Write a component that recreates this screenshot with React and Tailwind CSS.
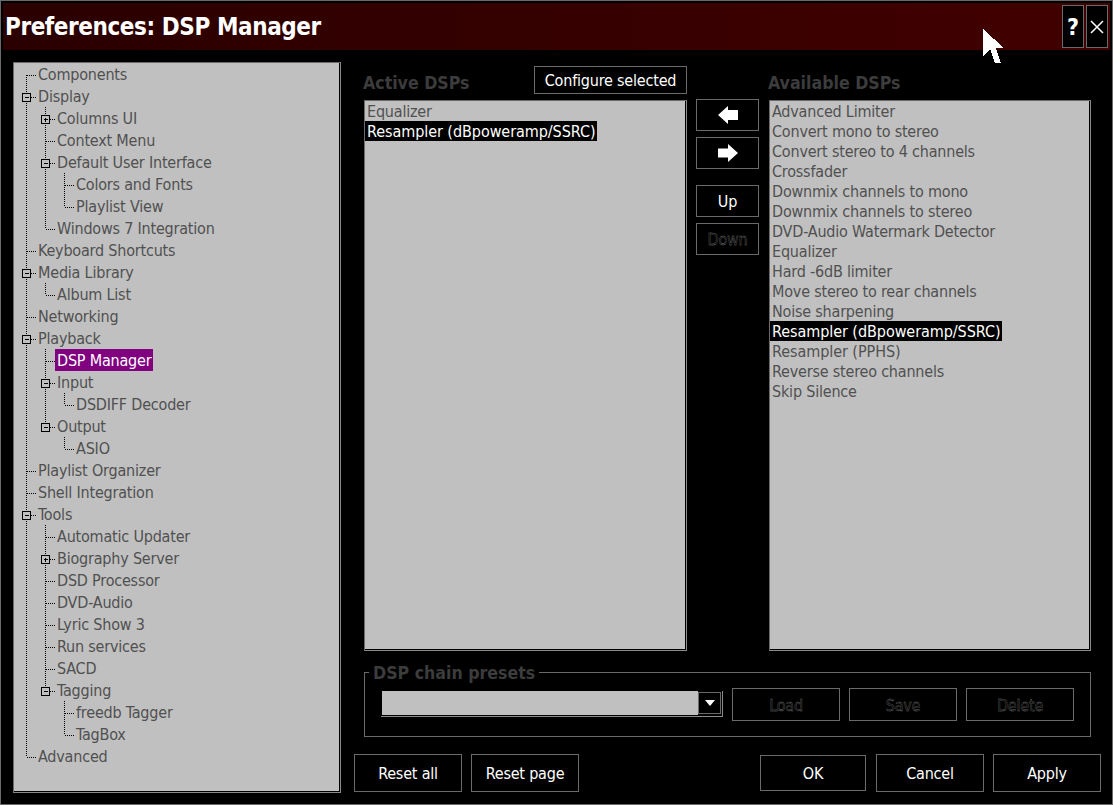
const tree = [
  { t: 'Components', l: 0 },
  { t: 'Display', l: 0, box: '-' },
  { t: 'Columns UI', l: 1, box: '+' },
  { t: 'Context Menu', l: 1 },
  { t: 'Default User Interface', l: 1, box: '-' },
  { t: 'Colors and Fonts', l: 2 },
  { t: 'Playlist View', l: 2 },
  { t: 'Windows 7 Integration', l: 1 },
  { t: 'Keyboard Shortcuts', l: 0 },
  { t: 'Media Library', l: 0, box: '-' },
  { t: 'Album List', l: 1 },
  { t: 'Networking', l: 0 },
  { t: 'Playback', l: 0, box: '-' },
  { t: 'DSP Manager', l: 1, selected: true },
  { t: 'Input', l: 1, box: '-' },
  { t: 'DSDIFF Decoder', l: 2 },
  { t: 'Output', l: 1, box: '-' },
  { t: 'ASIO', l: 2 },
  { t: 'Playlist Organizer', l: 0 },
  { t: 'Shell Integration', l: 0 },
  { t: 'Tools', l: 0, box: '-' },
  { t: 'Automatic Updater', l: 1 },
  { t: 'Biography Server', l: 1, box: '+' },
  { t: 'DSD Processor', l: 1 },
  { t: 'DVD-Audio', l: 1 },
  { t: 'Lyric Show 3', l: 1 },
  { t: 'Run services', l: 1 },
  { t: 'SACD', l: 1 },
  { t: 'Tagging', l: 1, box: '-' },
  { t: 'freedb Tagger', l: 2 },
  { t: 'TagBox', l: 2 },
  { t: 'Advanced', l: 0 },
];

const available = [
  'Advanced Limiter',
  'Convert mono to stereo',
  'Convert stereo to 4 channels',
  'Crossfader',
  'Downmix channels to mono',
  'Downmix channels to stereo',
  'DVD-Audio Watermark Detector',
  'Equalizer',
  'Hard -6dB limiter',
  'Move stereo to rear channels',
  'Noise sharpening',
  'Resampler (dBpoweramp/SSRC)',
  'Resampler (PPHS)',
  'Reverse stereo channels',
  'Skip Silence',
];

// does this level keep going below row i?
function hasNext(i, level) {
  for (let j = i + 1; j < tree.length; j++) {
    if (tree[j].l < level) return false;
    if (tree[j].l === level) return true;
  }
  return false;
}

function TreeLines({ index, level, box }) {
  const lineX = (a) => 12.5 + a * 19;
  const lines = [];
  for (let a = 0; a < level; a++) {
    if (hasNext(index, a)) lines.push(<path key={a} d={`M${lineX(a)} 0V22`} />);
  }
  const own = lineX(level);
  const top = index === 0 ? 12 : 0;
  const bottom = hasNext(index, level) ? 22 : 12;
  return (
    <svg width={22 + level * 19} height="22" className="shrink-0" shapeRendering="crispEdges">
      <g stroke="#000" strokeDasharray="1 1" fill="none">
        {lines}
        <path d={`M${own} ${top}V${bottom}`} />
        <path d={`M${own} 12.5H${own + 9}`} />
      </g>
      {box && (
        <g stroke="#000" fill="#c0c0c0">
          <rect x={own - 4} y="8.5" width="8" height="8" />
          <path d={`M${own - 2} 12.5H${own + 2}`} />
          {box === '+' && <path d={`M${own} 10.5V14.5`} />}
        </g>
      )}
    </svg>
  );
}

function Btn({ className = '', disabled, children }) {
  return (
    <button
      className={`flex items-center justify-center border border-[#6a6a6a] bg-black pt-[2px] ${
        disabled ? 'text-transparent [-webkit-text-stroke:0.3px_#808080]' : 'text-white'
      } ${className}`}
    >
      {children}
    </button>
  );
}

function ListBox({ items, selected, className = '' }) {
  return (
    <div className={`h-[551px] border border-t-[#6a6a6a] border-l-[#6a6a6a] border-r-[#8a8a8a] border-b-[#8a8a8a] bg-[#c0c0c0] shadow-[inset_-1px_-1px_0_#000] ${className}`}>
      {items.map((item) => (
        <div key={item} className="flex h-5 items-center">
          <span className={`h-5 overflow-hidden px-[2px] leading-[22px] ${item.startsWith('Resampler') ? 'tracking-[-0.06px]' : ''} ${item === selected ? 'bg-black text-white' : 'text-[#505050]'}`}>
            {item}
          </span>
        </div>
      ))}
    </div>
  );
}

export default function App() {
  return (
    <div className="relative flex h-[805px] w-[1113px] flex-col overflow-hidden border border-[#6a6a6a] bg-black p-[2px] font-['DejaVu_Sans_Condensed','DejaVu_Sans',sans-serif] text-[16px] leading-[22px] tracking-[-0.2px]">
      {/* title bar */}
      <div className="flex h-[47px] shrink-0 items-center justify-between bg-gradient-to-r from-[#2a0000] to-[#420000] pl-[2px] pr-[2px]">
        <h1 className="text-[24px] leading-none font-bold tracking-[-0.42px] text-white">Preferences: DSP Manager</h1>
        <div className="flex gap-[2px]">
          <div className="flex h-[43px] w-[22px] items-center justify-center border border-[#6a6a6a] bg-black text-[23px] font-bold text-white">?</div>
          <div className="flex h-[43px] w-[22px] items-center justify-center border border-[#6a6a6a] bg-black">
            <svg width="14" height="14" viewBox="0 0 14 14" stroke="#fff" strokeWidth="1.5"><path d="M1 1L13 13M13 1L1 13" /></svg>
          </div>
        </div>
      </div>

      <div className="flex flex-1 pl-[10px] pr-[9px] pt-3">
        {/* tree */}
        <div className="h-[731px] w-[328px] shrink-0 border border-t-[#6a6a6a] border-l-[#6a6a6a] border-r-[#8a8a8a] border-b-[#8a8a8a] bg-[#c0c0c0] shadow-[inset_-1px_-1px_0_#000]">
          {tree.map((row, i) => (
            <div key={row.t} className="flex h-[22px] items-center">
              <TreeLines index={i} level={row.l} box={row.box} />
              <span className={`h-[22px] overflow-hidden px-[2px] leading-[24px] ${row.selected ? 'bg-[#800080] text-white' : 'text-[#505050]'}`}>
                {row.t}
              </span>
            </div>
          ))}
        </div>

        {/* page */}
        <div className="ml-[13px] flex flex-1 flex-col">
          <div className="flex pl-[10px]">
            <div className="w-[323px]">
              <div className="flex h-[38px] items-end justify-between pb-[6px]">
                <span className="-ml-[1px] text-[17.6px] leading-[22px] font-bold tracking-normal text-[#3c3c3c]">Active DSPs</span>
                <Btn className="mt-[4px] h-[28px] w-[153px] self-start">Configure selected</Btn>
              </div>
              <ListBox items={['Equalizer', 'Resampler (dBpoweramp/SSRC)']} selected="Resampler (dBpoweramp/SSRC)" />
            </div>
            <div className="ml-[9px] flex w-[63px] flex-col pt-[37px]">
              <Btn className="h-[32px] !pt-0">
                <svg width="20" height="20" viewBox="0 0 20 20" fill="#fff"><path d="M0 10L10 1V5H20V15H10V19Z" /></svg>
              </Btn>
              <Btn className="mt-[6px] h-[32px] !pt-0">
                <svg width="20" height="20" viewBox="0 0 20 20" fill="#fff"><path d="M20 10L10 1V5.5H0V14.5H10V19Z" /></svg>
              </Btn>
              <Btn className="mt-[16px] h-[32px]">Up</Btn>
              <Btn className="mt-[6px] h-[32px]" disabled>Down</Btn>
            </div>
            <div className="ml-[10px] w-[322px]">
              <div className="-ml-[1px] flex h-[38px] items-end pb-[6px]">
                <span className="text-[17.6px] leading-[22px] font-bold tracking-normal text-[#3c3c3c]">Available DSPs</span>
              </div>
              <ListBox items={available} selected="Resampler (dBpoweramp/SSRC)" />
            </div>
          </div>

          {/* presets */}
          <div className="relative ml-[10px] mt-[21px] flex h-[65px] w-[727px] items-start gap-[9px] border border-[#6a6a6a] pl-[16px] pt-[15px]">
            <span className="absolute -top-[11px] left-[4px] bg-black px-[4px] text-[17.6px] leading-[22px] font-bold tracking-normal text-[#3c3c3c]">DSP chain presets</span>
            <div className="mt-[3px] flex h-[26px] w-[342px] border-b border-r border-[#8a8a8a] pl-[1px]">
              <div className="h-[24px] flex-1 bg-[#c0c0c0]"></div>
              <div className="mr-[1px] mt-[1px] flex h-[22px] w-[23px] items-center justify-center border border-[#6a6a6a] bg-black">
                <svg width="12" height="7" viewBox="0 0 12 7" fill="#fff"><path d="M1 0H11L6 6Z" /></svg>
              </div>
            </div>
            <Btn className="h-[33px] w-[108px]" disabled>Load</Btn>
            <Btn className="h-[33px] w-[108px]" disabled>Save</Btn>
            <Btn className="h-[33px] w-[108px]" disabled>Delete</Btn>
          </div>

          {/* bottom buttons */}
          <div className="mt-[17px] flex items-start">
            <Btn className="h-[38px] w-[108px]">Reset all</Btn>
            <Btn className="ml-[9px] h-[38px] w-[108px]">Reset page</Btn>
            <Btn className="ml-[181px] mt-[1px] h-[36px] w-[106px]">OK</Btn>
            <Btn className="ml-[10px] h-[38px] w-[108px]">Cancel</Btn>
            <Btn className="ml-[9px] h-[38px] w-[108px]">Apply</Btn>
          </div>
        </div>
      </div>

      {/* mouse pointer caught in the capture */}
      <svg className="absolute left-[982px] top-[27px]" width="22" height="37" viewBox="0 0 22 37" fill="#fff" shapeRendering="crispEdges">
        <path d="M0 1V28L7 21L12 35H18L13 20H21Z" />
      </svg>
    </div>
  );
}
